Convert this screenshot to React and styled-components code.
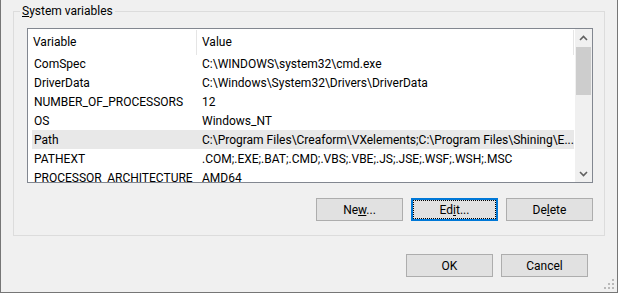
import React from 'react';
import styled, { createGlobalStyle, css } from 'styled-components';

const Global = createGlobalStyle`
  html, body { margin: 0; padding: 0; background: #f0f0f0; }
  body {
    font-family: Roboto, "Liberation Sans", Arial, sans-serif;
    font-size: 12px;
    color: #000;
  }
  * { box-sizing: border-box; }
`;

const Window = styled.div`
  position: relative;
  width: 618px;
  height: 293px;
  background: #f0f0f0;
  border-left: 1px solid #767676;
  border-right: 1px solid #767676;
  border-bottom: 1px solid #767676;
  padding: 3px 0 0 12px;
  display: flex;
  flex-direction: column;
`;

const Group = styled.fieldset`
  width: 592px;
  min-width: 0;
  margin: 0;
  border: 1px solid #dcdcdc;
  padding: 9px 11px 14px 13px;
  display: flex;
  flex-direction: column;
`;

const Legend = styled.legend`
  margin-left: -7px;
  padding: 0 2px;
  line-height: 16px;
  font-size: 12px;
`;

const ListView = styled.div`
  width: 566px;
  height: 155px;
  border: 1px solid #828790;
  background: #fff;
  display: flex;
  overflow: hidden;
`;

const ListBody = styled.div`
  flex: 1;
  min-width: 0;
  display: flex;
  flex-direction: column;
  overflow: hidden;
`;

const Header = styled.div`
  height: 25px;
  flex: none;
  display: grid;
  grid-template-columns: 169px 377px;
`;

const HeaderCell = styled.div`
  margin-top: 1px;
  border-right: 1px solid #e5e5e5;
  padding-left: ${p => p.$pad}px;
  line-height: 25px;
  white-space: nowrap;
`;

const Row = styled.div`
  flex: none;
  height: 19px;
  width: 542px;
  margin-left: 4px;
  display: grid;
  grid-template-columns: 164px 1fr;
  line-height: 20px;
  white-space: nowrap;
  background: ${p => (p.$selected ? '#e8e8e8' : 'transparent')};
`;

const Cell = styled.div`
  padding-left: ${p => p.$pad}px;
  overflow: hidden;
  white-space: nowrap;
`;

const ScrollBar = styled.div`
  width: 17px;
  flex: none;
  background: #f0f0f0;
  display: flex;
  flex-direction: column;
`;

const ArrowBox = styled.div`
  width: 17px;
  height: 17px;
  flex: none;
  display: flex;
  align-items: center;
  justify-content: center;
`;

const Track = styled.div`
  flex: 1;
  padding-top: 1px;
`;

const Thumb = styled.div`
  height: 48px;
  margin: 0 1px;
  background: #cdcdcd;
`;

const ButtonRow = styled.div`
  display: flex;
  justify-content: flex-end;
  gap: ${p => p.$gap}px;
  margin-top: ${p => p.$top}px;
  margin-right: ${p => p.$right}px;
`;

const Button = styled.button`
  width: 87px;
  height: 23px;
  padding: 0;
  margin: 0;
  background: #e1e1e1;
  border: 1px solid #adadad;
  border-radius: 0;
  font-family: inherit;
  font-size: 12px;
  color: #000;
  line-height: 20px;
  ${p =>
    p.$focused &&
    css`
      border: 2px solid #0078d7;
      outline: 1px dotted #000;
      outline-offset: -3px;
    `}
`;

const Grip = styled.svg`
  position: absolute;
  right: 2px;
  bottom: 2px;
`;

const rows = [
  ['ComSpec', 'C:\\WINDOWS\\system32\\cmd.exe'],
  ['DriverData', 'C:\\Windows\\System32\\Drivers\\DriverData'],
  ['NUMBER_OF_PROCESSORS', '12'],
  ['OS', 'Windows_NT'],
  ['Path', 'C:\\Program Files\\Creaform\\VXelements;C:\\Program Files\\Shining\\E...', true],
  ['PATHEXT', '.COM;.EXE;.BAT;.CMD;.VBS;.VBE;.JS;.JSE;.WSF;.WSH;.MSC'],
  ['PROCESSOR_ARCHITECTURE', 'AMD64'],
];

const Chevron = ({ up }) => (
  <svg width="9" height="6" viewBox="0 0 9 6">
    <polyline
      points={up ? '1,5 4.5,1.5 8,5' : '1,1 4.5,4.5 8,1'}
      fill="none"
      stroke="#606060"
      strokeWidth="1.6"
    />
  </svg>
);

export default function App() {
  return (
    <>
      <Global />
      <Window>
        <Group>
          <Legend>
            <u>S</u>ystem variables
          </Legend>
          <ListView>
            <ListBody>
              <Header>
                <HeaderCell $pad={5}>Variable</HeaderCell>
                <HeaderCell $pad={5}>Value</HeaderCell>
              </Header>
              {rows.map(([name, value, sel]) => (
                <Row key={name} $selected={sel}>
                  <Cell $pad={2}>{name}</Cell>
                  <Cell $pad={6}>{value}</Cell>
                </Row>
              ))}
            </ListBody>
            <ScrollBar>
              <ArrowBox>
                <Chevron up />
              </ArrowBox>
              <Track>
                <Thumb />
              </Track>
              <ArrowBox>
                <Chevron />
              </ArrowBox>
            </ScrollBar>
          </ListView>
          <ButtonRow $gap={8} $top={15} $right={0}>
            <Button>
              Ne<u>w</u>...
            </Button>
            <Button $focused>
              Ed<u>i</u>t...
            </Button>
            <Button>
              De<u>l</u>ete
            </Button>
          </ButtonRow>
        </Group>
        <ButtonRow $gap={8} $top={18} $right={29}>
          <Button>OK</Button>
          <Button>Cancel</Button>
        </ButtonRow>
        <Grip width="12" height="12" viewBox="0 0 12 12">
          {[
            [9, 1],
            [5, 5],
            [9, 5],
            [1, 9],
            [5, 9],
            [9, 9],
          ].map(([x, y]) => (
            <rect key={`${x}-${y}`} x={x} y={y} width="2" height="2" fill="#b9b9b9" />
          ))}
        </Grip>
      </Window>
    </>
  );
}
